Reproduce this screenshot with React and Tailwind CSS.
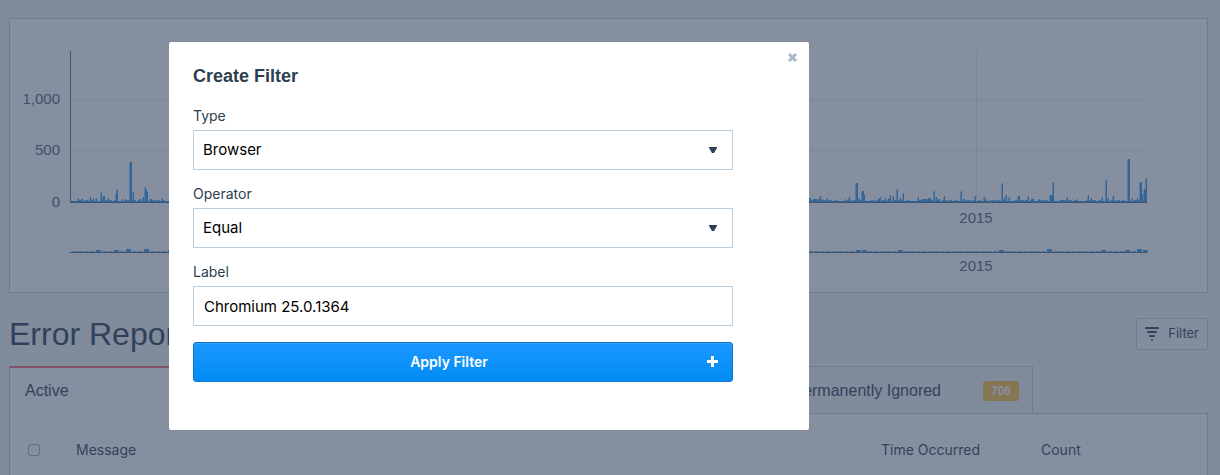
import React from "react";

// [x, height, width] of each error spike
const spikes = [
  [68, 4, 1], [71, 3, 2], [80, 5, 1], [83, 4, 1], [86, 4, 1], [91, 10, 1], [93, 6, 1], [94, 6, 1], [98, 4, 1],
  [106, 9, 1], [107, 13, 1], [112, 3, 1], [115, 3, 1], [120, 40, 2], [123, 10, 1], [129, 3, 2], [133, 5, 1],
  [135, 15, 1], [136, 12, 1], [137, 10, 1], [140, 3, 2], [152, 4, 1], [200, 8, 1], [260, 12, 1], [340, 6, 1],
  [420, 14, 1], [510, 9, 1], [600, 12, 1], [700, 7, 1], [799, 4, 2], [803, 3, 4], [808, 3, 2], [810, 6, 1], [812, 3, 1], [817, 4, 1],
  [835, 3, 1], [839, 5, 1], [846, 19, 2], [849, 4, 1], [852, 11, 2], [854, 7, 1], [868, 3, 2], [870, 5, 1],
  [875, 4, 1], [878, 3, 2], [880, 7, 1], [883, 6, 1], [887, 13, 1], [890, 4, 1], [893, 9, 1], [908, 5, 1],
  [912, 3, 5], [918, 4, 3], [924, 11, 1], [926, 5, 1], [928, 3, 2], [934, 6, 1], [951, 11, 1], [953, 3, 2], [965, 6, 1], [974, 5, 1],
  [976, 3, 1], [992, 19, 1], [994, 4, 1], [996, 7, 1], [999, 5, 1], [1008, 6, 2], [1015, 2, 2], [1018, 6, 1], [1021, 3, 3],
  [1029, 3, 1], [1032, 2, 1], [1040, 7, 3], [1043, 20, 1], [1050, 2, 4], [1057, 5, 1], [1067, 3, 1], [1078, 7, 1], [1081, 4, 1],
  [1092, 5, 1], [1096, 22, 1], [1098, 4, 1], [1103, 6, 1], [1118, 43, 2], [1122, 4, 1], [1127, 4, 1],
  [1130, 20, 2], [1132, 8, 1], [1134, 13, 2], [1136, 24, 1],
];

const tallRanges = { 3: 1, 4: 2, 7: 2, 9: 3, 12: 3, 16: 2, 131: 2, 132: 2, 138: 2, 155: 2, 163: 3, 172: 2, 176: 2, 178: 3, 179: 2 };

const Chart = () => (
  <section className="bg-white border border-[#bccddc]">
    <svg viewBox="0 0 1197 273" className="block w-full h-auto" role="img" aria-label="Errors over time">
      <g fill="#e4e9ed">
        <rect x="61" y="80" width="1076" height="1" />
        <rect x="61" y="131" width="1076" height="1" />
        <rect x="966" y="32" width="1" height="151" />
      </g>
      <g fill="#309aec">
        <rect x="61" y="182" width="1076" height="1" />
        {Array.from({ length: 179 }, (_, i) => (
          <rect key={i} x={62 + i * 6} y="181" width={2 + ((i * 7) % 4)} height={i % 4 ? 1 : 0} opacity="0.7" />
        ))}
        {spikes.map(([x, h, w]) => (
          <g key={x}>
            <rect x={x} y={183 - h} width={w} height={h} />
            <rect x={x - 1} y={184 - h} width="1" height={h - 1} opacity="0.5" />
          </g>
        ))}
        {Array.from({ length: 180 }, (_, i) => {
          const h = tallRanges[i] || 1;
          return <rect key={i} x={62 + i * 6 - Math.round(i / 60)} y={233 - h} width="5" height={h} opacity={h > 1 ? 1 : 0.7} />;
        })}
      </g>
      <g fill="#55698a">
        <rect x="60" y="32" width="1" height="152" />
        <rect x="60" y="183" width="1077" height="1" />
        <rect x="60" y="233" width="1077" height="1" />
      </g>
      <g fill="#4d607a" className="text-[15px] font-['Liberation_Sans',sans-serif]">
        <text x="50" y="85" textAnchor="end">1,000</text>
        <text x="50" y="136" textAnchor="end">500</text>
        <text x="50" y="188" textAnchor="end">0</text>
        <text x="966" y="204" textAnchor="middle">2015</text>
        <text x="966" y="252" textAnchor="middle">2015</text>
      </g>
    </svg>
  </section>
);

const FilterIcon = () => (
  <svg width="14" height="14" viewBox="0 0 14 14" fill="currentColor" aria-hidden="true">
    <rect x="0" y="0" width="14" height="2" rx="1" />
    <rect x="2" y="4" width="10" height="2" rx="1" />
    <rect x="4" y="8" width="6" height="2" rx="1" />
    <rect x="6" y="12" width="2" height="2" rx="1" />
  </svg>
);

const Heading = () => (
  <div className="flex items-center justify-between pt-[25px] pb-4">
    <h1 className="text-[32px] leading-8 font-['Liberation_Sans',sans-serif]">Error Reports</h1>
    <button className="flex items-center gap-[9px] h-8 px-2 border border-[#bccddc] rounded-[3px] bg-white/50 text-[13px]">
      <FilterIcon />
      Filter
    </button>
  </div>
);

const Tabs = () => (
  <nav className="flex -mb-px relative font-['Liberation_Sans',sans-serif]">
    <a href="#active" className="flex items-center w-64 h-12 px-[15px] bg-white border-t-2 border-t-[#ff6173] border-l border-l-[#bccddc]">
      Active
    </a>
    <a href="#resolved" className="flex items-center w-64 h-12 px-[15px] border border-b-0 border-[#bccddc]">Resolved</a>
    <a href="#ignored" className="flex items-center w-64 h-12 px-[15px] border border-x-0 border-b-0 border-[#bccddc]">Ignored</a>
    <a href="#permanent" className="flex items-center justify-end gap-[42px] w-64 h-12 pr-[13px] border border-b-0 border-[#bccddc]">
      Permanently Ignored
      <span className="w-9 h-5 rounded-[3px] bg-[#ffc33e] text-white text-xs leading-5 font-bold text-center">706</span>
    </a>
  </nav>
);

const Reports = () => (
  <section className="flex-1 bg-white border border-b-0 border-[#bccddc]">
    <table className="w-full table-fixed mt-6 text-left text-sm">
      <thead>
        <tr className="h-6">
          <th className="w-[66px] pl-[18px]">
            <input
              type="checkbox"
              aria-label="Select all"
              className="block appearance-none size-3 border border-[#a0a8b2] rounded-[3px] bg-white"
            />
          </th>
          <th className="font-normal">Message</th>
          <th className="w-40 font-normal">Time Occurred</th>
          <th className="w-[166px] font-normal">Count</th>
        </tr>
      </thead>
    </table>
  </section>
);

const SelectField = ({ id, label, options }) => (
  <div className="mb-[14px]">
    <label htmlFor={id} className="block mb-1 text-sm leading-5">{label}</label>
    <div className="relative">
      <select id={id} className="block appearance-none w-full h-10 px-[9px] border border-[#bccddc] bg-white text-black text-[15px]">
        {options.map((option) => (
          <option key={option}>{option}</option>
        ))}
      </select>
      <svg width="8" height="6" viewBox="0 0 8 6" className="absolute right-4 top-[17px] pointer-events-none" aria-hidden="true">
        <path d="M0 0h8v1L5 6H3L0 1z" fill="#2c4257" />
      </svg>
    </div>
  </div>
);

const FilterModal = () => (
  <div className="fixed inset-0 bg-[#354461]/60">
    <div role="dialog" aria-labelledby="filter-title" className="relative w-[640px] mt-[42px] ml-[169px] p-6 pb-12 bg-white rounded-xs">
      <button aria-label="Close" className="absolute right-3 top-[11px]">
        <svg width="9" height="9" viewBox="0 0 9 9" stroke="#a9b8c7" strokeWidth="3" aria-hidden="true">
          <path d="M1 1l7 7M8 1l-7 7" />
        </svg>
      </button>
      <h2 id="filter-title" className="mb-5 text-lg leading-5 font-bold font-['Liberation_Sans',sans-serif]">Create Filter</h2>
      <form className="w-[540px]" onSubmit={(e) => e.preventDefault()}>
        <SelectField id="type" label="Type" options={["Browser"]} />
        <SelectField id="operator" label="Operator" options={["Equal"]} />
        <label htmlFor="label" className="block mb-1 text-sm leading-5">Label</label>
        <input
          id="label"
          type="text"
          defaultValue="Chromium 25.0.1364"
          className="block w-full h-10 px-[10px] border border-[#bccddc] text-black text-[15px]"
        />
        <button className="relative w-full h-10 mt-4 pr-7 border border-[#1074c8] rounded-[3px] bg-linear-to-b from-[#1a98ff] to-[#008cf2] text-white text-sm font-semibold shadow-[inset_0_1px_0_#35a5ff]">
          Apply Filter
          <svg width="11" height="11" viewBox="0 0 11 11" fill="currentColor" className="absolute right-[14px] top-[13px]" aria-hidden="true">
            <path d="M4 0h3v4h4v3H7v4H4V7H0V4h4z" />
          </svg>
        </button>
      </form>
    </div>
  </div>
);

const App = () => (
  <div className="h-screen overflow-hidden flex flex-col pt-[18px] pl-[9px] pr-3 bg-[#f0f4f5] text-[#2c3e50] font-[Inter,sans-serif]">
    <Chart />
    <Heading />
    <Tabs />
    <Reports />
    <FilterModal />
  </div>
);

export default App;
